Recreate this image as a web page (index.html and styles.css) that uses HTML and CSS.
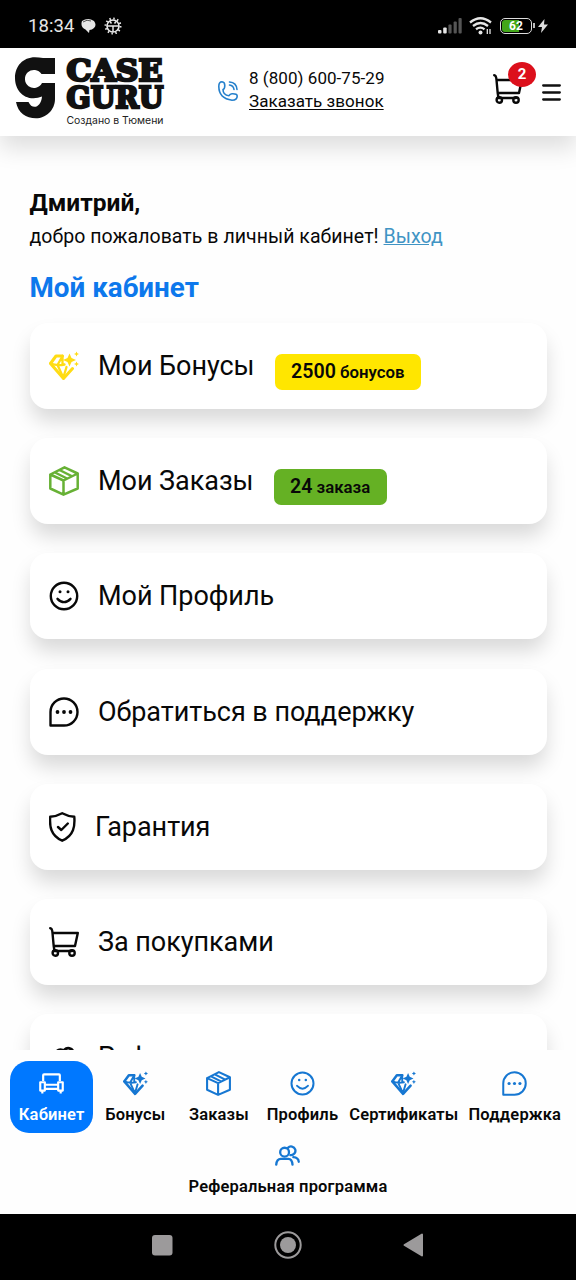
FILE: index.html
```html
<!DOCTYPE html>
<html lang="ru">
<head>
<meta charset="utf-8">
<title>Case Guru — Мой кабинет</title>
<link rel="stylesheet" href="styles.css">
</head>
<body>
<svg class="defs" width="0" height="0" aria-hidden="true">
  <defs>
    <symbol id="gem" viewBox="0 0 30 30">
      <g fill="none" stroke="currentColor" stroke-width="3" stroke-linejoin="round" stroke-linecap="round">
        <path d="M13.500 5H7L1.500 12.500L14.500 27.500L23.500 17.500"/>
        <path stroke-width="2.300" d="M1.500 12.500Q8 15 15.500 13.500M8.500 14L14.500 27M13.500 5L8.800 13.500M13.500 5V13.500M17.500 16L14.500 26"/>
      </g>
      <path fill="currentColor" d="M20.500 2.500L22.500 7L27 9L22.500 11L20.500 15.500L18.500 11L14 9L18.500 7ZM27.500 .500L28.300 2.200L30 3L28.300 3.800L27.500 5.500L26.700 3.800L25 3L26.700 2.200ZM27.500 10.500L28.300 12.200L30 13L28.300 13.800L27.500 15.500L26.700 13.800L25 13L26.700 12.200Z"/>
    </symbol>
    <symbol id="box" viewBox="0 0 30 30">
      <path fill="none" stroke="currentColor" stroke-width="2.500" stroke-linejoin="round" stroke-linecap="round" d="M1.300 8.500L15.500 1.300L28.700 7.500V22.500L14.500 28.700L1.300 22.500ZM1.300 8.500L14.500 14.500L28.700 7.500M14.500 14.500V28.500M6 6.500L18 12.500M10.500 4L22.500 10"/>
    </symbol>
    <symbol id="smile" viewBox="0 0 30 30">
      <g fill="none" stroke="currentColor" stroke-width="2.400" stroke-linecap="round"><circle cx="15" cy="15" r="13.200"/><path d="M8.500 17.800Q15 24.500 21.500 17.800"/></g>
      <g fill="currentColor"><circle cx="11" cy="10.700" r="1.500"/><circle cx="19" cy="10.700" r="1.500"/></g>
    </symbol>
    <symbol id="chat" viewBox="0 0 30 30">
      <path fill="none" stroke="currentColor" stroke-width="2.400" stroke-linejoin="round" d="M1.500 28.500V15A13.500 13.500 0 1 1 15 28.500Z"/>
      <g fill="currentColor"><circle cx="8.500" cy="15" r="1.900"/><circle cx="15" cy="15" r="1.900"/><circle cx="21.500" cy="15" r="1.900"/></g>
    </symbol>
    <symbol id="shield" viewBox="0 0 27 30">
      <path fill="none" stroke="currentColor" stroke-width="2.400" stroke-linejoin="round" stroke-linecap="round" d="M13.200 1.200Q19 4.300 25.300 4.800C26 14 25 23.500 13.200 28.700C1.500 23.500 .500 14 1.200 4.800Q7.500 4.300 13.200 1.200ZM9 15L12.300 18L18.800 11.500"/>
    </symbol>
    <symbol id="cart" viewBox="0 0 30 30">
      <g fill="none" stroke="currentColor" stroke-width="2.400" stroke-linejoin="round" stroke-linecap="round"><path d="M1.200 1.200Q3.200 1.300 3.500 6L4.700 19H26L28.800 6H3.500M4.700 19L5.500 24H23"/><circle cx="6.300" cy="26" r="2.700"/><circle cx="23" cy="26" r="2.700"/></g>
    </symbol>
    <symbol id="people" viewBox="0 0 30 30">
      <g fill="none" stroke="currentColor" stroke-width="2.800" stroke-linecap="round"><circle cx="11.500" cy="11" r="5.300"/><path d="M15.500 5.800A5.200 5.200 0 1 1 18.500 14.500M1.500 26Q2 19 7 19H16Q20.500 19 21 26M22 17Q28 17.500 28.500 22.500"/></g>
    </symbol>
    <symbol id="sofa" viewBox="0 0 30 30">
      <path fill="none" stroke="currentColor" stroke-width="2.600" stroke-linejoin="round" d="M5 12V5Q5 4 6 4H24Q25 4 25 5V12M7 17V13.500H1.500V23.500H7ZM28.500 13.500H23V23.500H28.500ZM7 16.500H23M7 21.500H23M4 24V27M26 24V27"/>
    </symbol>
  </defs>
</svg>

<div class="status">
  <span class="clock">18:34</span>
  <svg class="note" width="16" height="16" viewBox="0 0 16 16"><path fill="#e6e6e6" d="M1 3Q7-1 13 3Q16 7 13 10Q11 12 8.500 12L8 15L4.500 11.500Q-1 9 1 3Z"/><path d="M2 4Q6 1 10 3" stroke="#555" fill="none"/></svg>
  <svg class="gear" width="18" height="18" viewBox="0 0 18 18"><g fill="none" stroke="#e6e6e6"><circle cx="9" cy="9" r="7.500" stroke-width="2" stroke-dasharray="1.500 2.430"/><circle cx="9" cy="9" r="6" stroke-width="1.600"/><path stroke-width="1.500" d="M3 9H15M9 9V15M6 4.500L7.500 6.500M12 4.500L10.500 6.500"/></g></svg>
  <div class="signals">
    <svg width="24" height="16" viewBox="0 0 24 16"><g fill="#e6e6e6"><rect y="12" width="3.500" height="3.500" rx="1"/><rect x="5.200" y="9.500" width="3.500" height="6" rx="1"/></g><g fill="#555"><rect x="10.400" y="6.500" width="3.200" height="9" rx="1"/><rect x="15.600" y="3.500" width="3.200" height="12" rx="1"/><rect x="20.500" y="0" width="3.200" height="15.500" rx="1"/></g></svg>
    <svg class="wifi" width="24" height="18" viewBox="0 0 24 18"><g fill="none" stroke="#e6e6e6" stroke-width="2.300"><path d="M1 5.500Q11.500-3 22 5.500M4 9Q11.500 3 19 9M7 12.300Q11.500 9 15.500 12.300"/><path stroke-width="1.300" d="M18.300 12V17M21 12V17"/></g><circle cx="11.500" cy="15.500" r="2" fill="#e6e6e6"/></svg>
    <span class="battery">62</span><span class="battery-tip"></span>
    <svg class="bolt" width="10" height="14" viewBox="0 0 10 14"><path fill="#ddd" d="M6.500 0L0 8H4L3 14L10 5.500H6Z"/></svg>
  </div>
</div>

<header class="header">
  <svg class="logo" width="152" height="72" viewBox="0 0 152 72">
    <path fill="#111" d="M40 2V18H26.500A9 9 0 1 0 27 27H40V43C40 54 31 62.300 21 62.300C11 62.300 3 57 1 46H13.500C17 54 26 52 27 40.500Q23 42.300 18.500 42.300C7 42.300 0 33 0 22C0 10 8 1.200 20 1.200Q24 1.200 28 2Z"/>
    <g class="wordmark">
      <text x="51.500" y="25" textLength="96" lengthAdjust="spacingAndGlyphs">CASE</text>
      <text x="51.500" y="51.500" textLength="97" lengthAdjust="spacingAndGlyphs">GURU</text>
    </g>
    <text class="tagline" x="51.500" y="68" textLength="97" lengthAdjust="spacingAndGlyphs">Создано в Тюмени</text>
  </svg>
  <div class="phone">
    <svg width="20" height="20" viewBox="0 0 20 20"><path fill="none" stroke="#2580cc" stroke-width="1.600" stroke-linecap="round" stroke-linejoin="round" d="M4 .8Q6.800 1 6.800 4.500Q6.800 8 5 8.500Q5 14 11 14.800Q12 12.500 14.500 12.800Q19.200 12.700 19.200 15Q19.200 19.200 14 19.200Q1 17.500 .8 5.500Q.8 .8 4 .8ZM11.500 1Q18.500 1.500 19 8.500M11.500 4Q15.500 4.500 16 8.500"/></svg>
    <div class="phone-text"><span class="number">8 (800) 600-75-29</span><a class="callback">Заказать звонок</a></div>
  </div>
  <div class="tools">
    <div class="basket"><svg width="30" height="30"><use href="#cart"/></svg><span class="count">2</span></div>
    <svg class="burger" width="19" height="17" viewBox="0 0 19 17"><path stroke="#111" stroke-width="2.300" stroke-linecap="round" d="M1.200 1.500H17.800M1.200 8.500H17.800M1.200 15.500H17.800"/></svg>
  </div>
</header>

<main class="main">
  <h2 class="name">Дмитрий,</h2>
  <p class="welcome">добро пожаловать в личный кабинет! <a class="exit">Выход</a></p>
  <h1 class="title">Мой кабинет</h1>
  <div class="cards">
    <div class="card"><svg class="icon yellow"><use href="#gem"/></svg><span class="label">Мои Бонусы</span><span class="pill pill-yellow"><b>2500</b> бонусов</span></div>
    <div class="card"><svg class="icon green"><use href="#box"/></svg><span class="label">Мои Заказы</span><span class="pill pill-green"><b>24</b> заказа</span></div>
    <div class="card"><svg class="icon"><use href="#smile"/></svg><span class="label">Мой Профиль</span></div>
    <div class="card"><svg class="icon"><use href="#chat"/></svg><span class="label">Обратиться в поддержку</span></div>
    <div class="card"><svg class="icon narrow"><use href="#shield"/></svg><span class="label">Гарантия</span></div>
    <div class="card"><svg class="icon"><use href="#cart"/></svg><span class="label">За покупками</span></div>
    <div class="card"><svg class="icon low"><use href="#people"/></svg><span class="label">Реф</span></div>
  </div>
</main>

<nav class="tabs">
  <a class="tab active"><svg class="tab-icon"><use href="#sofa"/></svg><span>Кабинет</span></a>
  <a class="tab"><svg class="tab-icon"><use href="#gem"/></svg><span>Бонусы</span></a>
  <a class="tab"><svg class="tab-icon"><use href="#box"/></svg><span>Заказы</span></a>
  <a class="tab"><svg class="tab-icon"><use href="#smile"/></svg><span>Профиль</span></a>
  <a class="tab"><svg class="tab-icon"><use href="#gem"/></svg><span>Сертификаты</span></a>
  <a class="tab"><svg class="tab-icon"><use href="#chat"/></svg><span>Поддержка</span></a>
  <a class="tab"><svg class="tab-icon"><use href="#people"/></svg><span>Реферальная программа</span></a>
</nav>

<div class="system">
  <svg width="28" height="28" viewBox="0 0 28 28"><rect x="4" y="4" width="20.500" height="20.500" rx="3" fill="#9c9a9b"/></svg>
  <svg width="28" height="28" viewBox="0 0 28 28"><circle cx="14" cy="14" r="12.700" fill="none" stroke="#9c9a9b" stroke-width="2"/><circle cx="14" cy="14" r="8" fill="#9c9a9b"/></svg>
  <svg width="28" height="28" viewBox="0 0 28 28"><path d="M4.500 14L22 3.500V24.500Z" fill="#9c9a9b" stroke="#9c9a9b" stroke-width="2" stroke-linejoin="round"/></svg>
</div>
</body>
</html>
```
FILE: styles.css
```css
* { box-sizing: border-box; }
body { margin: 0; width: 576px; height: 1280px; overflow: hidden; display: flex; flex-direction: column; background: #fefefe; color: #080808; font-family: Roboto, sans-serif; }
.defs { position: absolute; }
svg { display: block; flex: none; }

.status { height: 48px; flex: none; background: #000; color: #e6e6e6; display: flex; align-items: center; padding: 3px 28px 0 28px; }
.clock { font-size: 18.500px; letter-spacing: .1px; font-weight: 450; width: 53px; }
.gear { margin-left: 7px; }
.signals { margin-left: auto; display: flex; align-items: center; }
.wifi { margin-left: 7px; }
.battery { margin-left: 7px; width: 32px; height: 16px; border: 1.500px solid #ddd; border-radius: 5px; background: linear-gradient(90deg, #43a719 60%, #000 60%); background-clip: content-box; padding: 1px; font-size: 12px; line-height: 12px; text-align: center; font-weight: 700; color: #fff; }
.battery-tip { width: 2px; height: 5px; margin-left: 1px; background: #bbb; }
.bolt { margin-left: 3px; }

.header { height: 88px; flex: none; display: flex; background: #fff; position: relative; z-index: 1; box-shadow: 0 12px 22px rgba(0,0,0,.13); padding: 8px 15px 0; }
.logo { overflow: visible; }
.wordmark { font: 700 30px "DejaVu Serif", serif; fill: #111; stroke: #111; stroke-width: 2.600px; }
.tagline { font: 10.500px Inter, sans-serif; fill: #222; }
.phone { display: flex; gap: 11px; margin-left: 51px; padding-top: 11px; }
.phone > svg { margin-top: 14px; }
.phone-text { display: flex; flex-direction: column; font-size: 17px; line-height: 23.200px; letter-spacing: .05px; white-space: nowrap; }
.callback { text-decoration: underline; text-underline-offset: 2px; }
.tools { display: flex; margin-left: auto; gap: 19px; }
.basket { position: relative; padding-top: 18px; }
.count { position: absolute; left: 15px; top: 6px; width: 28px; height: 25px; border-radius: 50%; background: #dc101c; color: #fff; font-weight: 700; font-size: 15px; line-height: 25px; text-align: center; }
.burger { margin: 28px 0 0; }

.main { flex: 1; min-height: 0; overflow: hidden; padding: 52px 29.500px 0; }
.name { margin: 0; font-size: 24.500px; line-height: 30px; font-weight: 700; }
.welcome { margin: 4px 0 0; font-size: 19.500px; line-height: 30px; letter-spacing: .05px; white-space: nowrap; }
.exit { color: #4094c4; text-decoration: underline; }
.title { margin: 19px 0 0; font-size: 27.800px; line-height: 34px; font-weight: 700; color: #0d78ec; }
.cards { display: flex; flex-direction: column; gap: 29.200px; margin-top: 18px; }
.card { height: 86px; flex: none; display: flex; align-items: center; border-radius: 18px; background: #fff; padding-left: 19px; box-shadow: 0 13px 20px -1px rgba(0,0,0,.15); }
.icon { width: 30px; height: 30px; }
.icon.narrow { width: 27px; }
.icon.low { margin-top: 4px; }
.yellow { color: #ffdc14; }
.green { color: #67b135; }
.label { margin-left: 19.500px; font-size: 27px; letter-spacing: -.04px; white-space: nowrap; }
.pill { margin: 11px 0 0 20px; height: 36px; padding: 0 16.500px; border-radius: 7px; font-size: 16.800px; line-height: 36px; font-weight: 600; white-space: nowrap; }
.pill b { font-size: 19.600px; font-weight: 600; }
.pill-yellow { background: #ffe600; }
.pill-green { background: #65b124; }

.tabs { height: 164px; flex: none; position: relative; background: #fefefe; padding: 11px 0 0; display: flex; flex-wrap: wrap; justify-content: center; align-content: flex-start; }
.tab { min-width: 83.600px; height: 71.500px; padding: 10px 5px 0; border-radius: 19px; display: flex; flex-direction: column; align-items: center; gap: 8px; font-size: 16.500px; line-height: 22px; letter-spacing: .17px; font-weight: 600; white-space: nowrap; }
.tab-icon { width: 25px; height: 25px; color: #1677d2; }
.active { background: #0078ff; color: #fff; }
.active .tab-icon { color: #fff; }

.system { height: 66px; flex: none; background: #000; display: flex; justify-content: center; gap: 98px; padding-top: 17px; }
```
